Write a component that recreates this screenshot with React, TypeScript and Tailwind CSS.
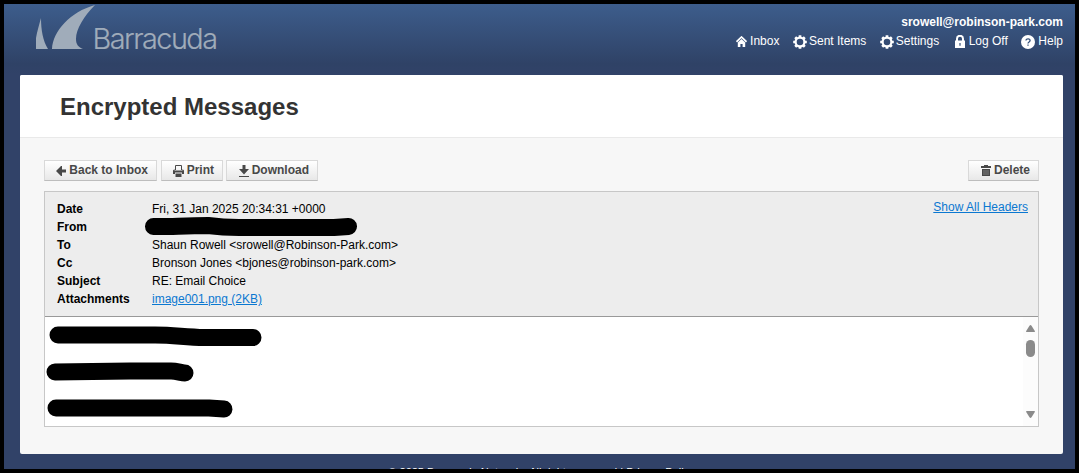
import React from 'react';

interface IconProps {
  className?: string;
}

const BarracudaLogo: React.FC = () => (
  <svg className="block h-[50px] w-[190px] overflow-visible fill-[#a0acba]" viewBox="0 0 190 50" role="img" aria-label="Barracuda">
    <path d="M0 45V34C1 28 3 21 5 14C5 26 7 37 12 45Z" />
    <path d="M16 45C17 27 34 8 59 1C48 12 40 25 40 35C40 40 42 43 47 45Z" />
    <text
      x="56.5"
      y="45"
      className="stroke-[#a0acba] stroke-[0.2px] font-[family-name:Inter] text-[28.5px] font-light tracking-[-1.5px]"
      textLength="124"
      lengthAdjust="spacingAndGlyphs"
    >
      Barracuda
    </text>
  </svg>
);

const HomeIcon: React.FC<IconProps> = ({ className }) => (
  <svg className={className} width="11" height="11" viewBox="0 0 11 11" fill="none">
    <path d="M.5 5.8 5.5 1l5 4.8" stroke="currentColor" strokeWidth="1.7" />
    <path d="M1.8 6.4 5.5 3l3.7 3.4V11H6.6V8H4.4v3H1.8z" fill="currentColor" />
  </svg>
);

const GearIcon: React.FC<IconProps> = ({ className }) => (
  <svg className={className} width="14" height="14" viewBox="0 0 14 14" fill="none" stroke="currentColor">
    <circle cx="7" cy="7" r="4.4" strokeWidth="2.2" />
    <path
      d="M7 .2v2.2M7 11.6v2.2M.2 7h2.2M11.6 7h2.2M2.2 2.2l1.6 1.6M10.2 10.2l1.6 1.6M2.2 11.8l1.6-1.6M10.2 3.8l1.6-1.6"
      strokeWidth="2.7"
    />
  </svg>
);

const LockIcon: React.FC<IconProps> = ({ className }) => (
  <svg className={className} width="10" height="13" viewBox="0 0 10 13" fill="none">
    <path d="M2 6V3.8a3 3 0 0 1 6 0V6" stroke="currentColor" strokeWidth="2" />
    <path d="M0 5.5h10V13H0z" fill="currentColor" />
    <path d="M5 8v2.8" stroke="#34507a" strokeWidth="1.2" />
  </svg>
);

const HelpIcon: React.FC<IconProps> = ({ className }) => (
  <svg className={className} width="14" height="14" viewBox="0 0 14 14">
    <circle cx="7" cy="7" r="7" fill="currentColor" />
    <path d="M5 5.6c0-2.5 4.1-2.3 4.1 0C9.1 7 7 6.9 7 8.5M7 9.5v1.3" fill="none" stroke="#34507a" strokeWidth="1.3" />
  </svg>
);

const BackIcon: React.FC<IconProps> = ({ className }) => (
  <svg className={className} width="10" height="10" viewBox="0 0 10 10" fill="currentColor">
    <path d="M0 5 5 0h1v3.4h4v3.2H6V10H5z" />
  </svg>
);

const PrintIcon: React.FC<IconProps> = ({ className }) => (
  <svg className={className} width="11" height="12" viewBox="0 0 11 12">
    <path d="M2.5 5V.5h6V5" fill="none" stroke="currentColor" />
    <path d="M0 5.5 1.5 4v1.5h8V4L11 5.5V9H9V7.5H2V9H0zM2.5 8.5h6V12h-6z" fill="currentColor" />
  </svg>
);

const DownloadIcon: React.FC<IconProps> = ({ className }) => (
  <svg className={className} width="10" height="12" viewBox="0 0 10 12" fill="currentColor">
    <path d="M3.5 0h3v4H10L5 9.5 0 4h3.5zM0 11h10v1H0z" />
  </svg>
);

const TrashIcon: React.FC<IconProps> = ({ className }) => (
  <svg className={className} width="10" height="11" viewBox="0 0 10 11">
    <path d="M3 0h4v1h3v2H0V1h3zM1 4h8v7H1z" fill="currentColor" />
    <path d="M3 5v5M5 5v5M7 5v5" stroke="#999" strokeWidth=".7" />
  </svg>
);

interface ToolButtonProps {
  icon: React.ReactNode;
  className: string;
  children: React.ReactNode;
}

const ToolButton: React.FC<ToolButtonProps> = ({ icon, className, children }) => (
  <button
    className={`flex h-[21px] items-center justify-end border border-[#d9d9d9] border-b-[#bdbdbd] bg-linear-to-b from-white to-[#e8e8e8] pr-2 font-bold text-[#484848] ${className}`}
  >
    {icon}
    <span className="whitespace-nowrap pb-px leading-[18px]">{children}</span>
  </button>
);

const navItems = [
  { text: 'Inbox', icon: <HomeIcon className="mr-[3px] mt-px" /> },
  { text: 'Sent Items', icon: <GearIcon className="mr-0.5 mt-px" /> },
  { text: 'Settings', icon: <GearIcon className="mr-0.5 mt-px" /> },
  { text: 'Log Off', icon: <LockIcon className="ml-0.5 mr-1 mt-px" /> },
  { text: 'Help', icon: <HelpIcon className="mr-[3px] mt-px" /> },
];

const headers = [
  { label: 'Date', value: 'Fri, 31 Jan 2025 20:34:31 +0000' },
  { label: 'From', value: '' },
  { label: 'To', value: 'Shaun Rowell <srowell@Robinson-Park.com>' },
  { label: 'Cc', value: 'Bronson Jones <bjones@robinson-park.com>' },
  { label: 'Subject', value: 'RE: Email Choice' },
  { label: 'Attachments', value: 'image001.png (2KB)', link: true },
];

const Header: React.FC = () => (
  <header className="flex h-[71px] shrink-0 justify-between pl-8 pr-3 text-white">
    <BarracudaLogo />
    <div className="flex flex-col items-end pt-[11px]">
      <div className="h-[17px] font-bold leading-[14px]">srowell@robinson-park.com</div>
      <nav className="flex gap-[13.5px]">
        {navItems.map((item) => (
          <a key={item.text} className="flex h-[18px] items-center whitespace-nowrap leading-[18px]">
            {item.icon}
            {item.text}
          </a>
        ))}
      </nav>
    </div>
  </header>
);

const MessageHeaders: React.FC = () => (
  <div className="flex h-[125px] justify-between border-b border-[#999] bg-[#ededed] pl-3 pr-[10px] pt-2 text-black">
    <dl>
      {headers.map((row) => (
        <div key={row.label} className="flex h-[18px] leading-[18px]">
          <dt className="w-[95px] font-bold">{row.label}</dt>
          <dd className="whitespace-nowrap tracking-[-0.01px]">
            {row.label === 'From' ? (
              <svg className="-ml-2 -mt-1 block" width="215" height="22" viewBox="0 0 215 22" fill="none">
                <path
                  d="M9.5 12.5C25 13 39 11.5 64 11.5C75 13 83 13.5 95 13.5H190L204.5 12.5"
                  stroke="#000"
                  strokeWidth="17"
                  strokeLinecap="round"
                  strokeLinejoin="round"
                />
              </svg>
            ) : (
              <span className={row.link ? 'text-[#0b78d1] underline' : ''}>{row.value}</span>
            )}
          </dd>
        </div>
      ))}
    </dl>
    <a className="-mt-0.5 h-[18px] whitespace-nowrap leading-[18px] text-[#0b78d1] underline">Show All Headers</a>
  </div>
);

const MessageBody: React.FC = () => (
  <div className="flex h-[109px] justify-between bg-white">
    <svg width="222" height="109" viewBox="0 0 222 109" fill="none" stroke="#000" strokeWidth="17" strokeLinecap="round" strokeLinejoin="round">
      <path d="M13 18H110C130 18 138 20 160 20.5H208" />
      <path d="M10 55L85 54H126C132 54 136 56 140 56" />
      <path d="M11 91H164L179 92" />
    </svg>
    <div className="flex w-[15px] flex-col items-center bg-[#fcfcfc] pt-2">
      <svg width="9" height="7" viewBox="0 0 9 7" fill="#8a8a8a">
        <path d="M3.5.7Q4.5-.6 5.5.7L8.8 6Q9.2 7 8.2 7H.8Q-.2 7 .2 6z" />
      </svg>
      <div className="mt-2 h-[17px] w-[9px] rounded-full bg-[#8a8a8a]" />
      <svg className="mt-[54px]" width="9" height="7" viewBox="0 0 9 7" fill="#8a8a8a">
        <path d="M3.5 6.3Q4.5 7.6 5.5 6.3L8.8 1Q9.2 0 8.2 0H.8Q-.2 0 .2 1z" />
      </svg>
    </div>
  </div>
);

const App: React.FC = () => {
  return (
    <div className="h-[473px] w-[1079px] overflow-hidden border-4 border-black bg-[#314268] font-['Liberation_Sans',Arial,sans-serif] text-[12px]">
      <div className="flex h-full flex-col overflow-hidden bg-[linear-gradient(#3d5d8c_0px,#2f4266_60px,#314268_70px)]">
        <Header />
        <main className="ml-4 h-[379px] w-[1043px] shrink-0 overflow-hidden rounded-[2px] bg-[#f7f7f7]">
          <h1 className="h-[63px] border-b border-[#e9e9e9] bg-white pl-10 text-[24px] font-bold leading-[63px] text-[#333]">
            Encrypted Messages
          </h1>
          <div className="px-6 pt-[22px]">
            <div className="flex justify-between">
              <div className="flex">
                <ToolButton className="w-[113px]" icon={<BackIcon className="mr-[3px]" />}>Back to Inbox</ToolButton>
                <ToolButton className="ml-1 w-[62px]" icon={<PrintIcon className="mr-[3px] mt-px" />}>Print</ToolButton>
                <ToolButton className="ml-[3px] w-[92px]" icon={<DownloadIcon className="mr-[3px] mt-px" />}>Download</ToolButton>
              </div>
              <ToolButton className="w-[71px]" icon={<TrashIcon className="mr-[3px]" />}>Delete</ToolButton>
            </div>
            <section className="mt-[10px] h-[236px] border border-[#c7c7c7]">
              <MessageHeaders />
              <MessageBody />
            </section>
          </div>
        </main>
        <footer className="mt-[10px] h-4 shrink-0 pl-1 text-center text-[11px] leading-4 text-white">
          © 2025 Barracuda Networks All rights reserved | <a>Privacy Policy</a>
        </footer>
      </div>
    </div>
  );
};

export default App;
